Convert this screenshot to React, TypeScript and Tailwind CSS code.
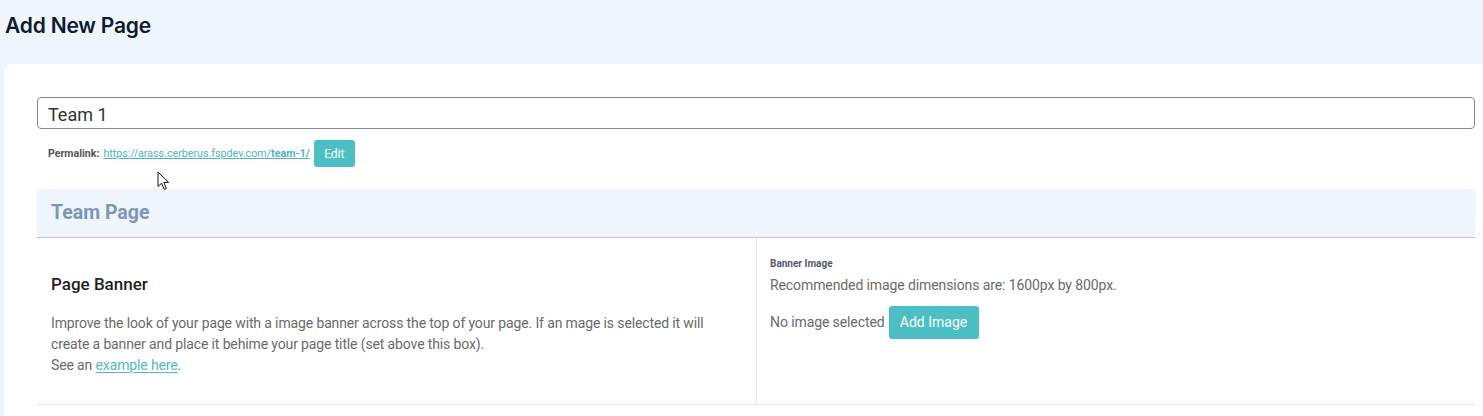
import React from "react";

function Cursor() {
  return (
    <svg
      className="pointer-events-none absolute left-[157px] top-[171px]"
      width="13"
      height="20"
      viewBox="0 0 13 20"
    >
      <path
        d="M1 1 L1 15.5 L4.6 12.2 L7.3 18.4 L9.4 17.5 L6.8 11.4 L11.6 11.4 Z"
        fill="#fff"
        stroke="#111"
        strokeWidth="1"
        strokeLinejoin="round"
      />
    </svg>
  );
}

export default function App() {
  return (
    <div className="relative h-[416px] w-[1483px] overflow-hidden bg-[#eef5fc] font-['Roboto',sans-serif]">
      <h1 className="h-[64px] pl-[5px] pt-[12px] text-[21px] font-semibold leading-[28px] text-[#111a33] font-['Inter',sans-serif] tracking-[-0.2px]">
        Add New Page
      </h1>

      <div className="ml-[4px] h-[352px] rounded-tl-[8px] bg-white pl-[33px] pr-[8px] pt-[33px]">
        <div className="flex h-[32px] items-center rounded-[4px] border border-[#8a8a8a] bg-white pl-[10px] text-[18px] leading-[22px] text-[#333]">
          <span className="mt-[3px]">Team 1</span>
        </div>

        <div className="mt-[11px] flex items-start pl-[11px]">
          <span className="mt-[6px] text-[10.6px] font-bold text-[#555]">Permalink:</span>
          <a
            href="#"
            className="ml-[4px] mt-[6px] text-[10.7px] text-[#4fb3bb] underline underline-offset-[1px]"
          >
            https://arass.cerberus.fspdev.com/<span className="font-bold">team-1/</span>
          </a>
          <button
            type="button"
            className="ml-[4px] h-[27px] w-[41px] rounded-[3px] bg-[#4cbfc4] text-[12px] text-white"
          >
            Edit
          </button>
        </div>

        <div className="mt-[22px]">
          <div className="flex h-[49px] items-center rounded-t-[4px] border-b border-[#c4c4c4] bg-[#eef5fc] pl-[14px]">
            <h2 className="text-[19.5px] font-bold text-[#7e95b8]">Team Page</h2>
          </div>

          <div className="flex h-[167px] border-b border-[#e8e8e8]">
            <div className="w-[720px] border-r border-[#e6e6e6] pl-[14px] pt-[36px]">
              <h3 className="text-[17px] font-medium leading-[20px] text-[#1f1f1f]">Page Banner</h3>
              <p className="mt-[19px] text-[14px] leading-[21px] tracking-[-0.13px] text-[#6a6a6a]">
                Improve the look of your page with a image banner across the top of your page. If an mage is selected it will
                <br />
                create a banner and place it behime your page title (set above this box).
                <br />
                See an{" "}
                <a href="#" className="text-[#55b9c0] underline underline-offset-2">
                  example here
                </a>
                .
              </p>
            </div>

            <div className="flex-1 pl-[13px] pt-[19px]">
              <div className="text-[10px] font-bold leading-[13px] text-[#525a6b]">Banner Image</div>
              <div className="mt-[6px] text-[14px] leading-[18px] tracking-[-0.1px] text-[#6a6a6a]">
                Recommended image dimensions are: 1600px by 800px.
              </div>
              <div className="mt-[12px] flex items-center">
                <span className="text-[14px] tracking-[-0.1px] text-[#6a6a6a]">No image selected</span>
                <button
                  type="button"
                  className="ml-[4px] h-[33px] w-[90px] rounded-[3px] bg-[#4cbfc4] text-[14px] text-white"
                >
                  Add Image
                </button>
              </div>
            </div>
          </div>
        </div>
      </div>

      <Cursor />
    </div>
  );
}
